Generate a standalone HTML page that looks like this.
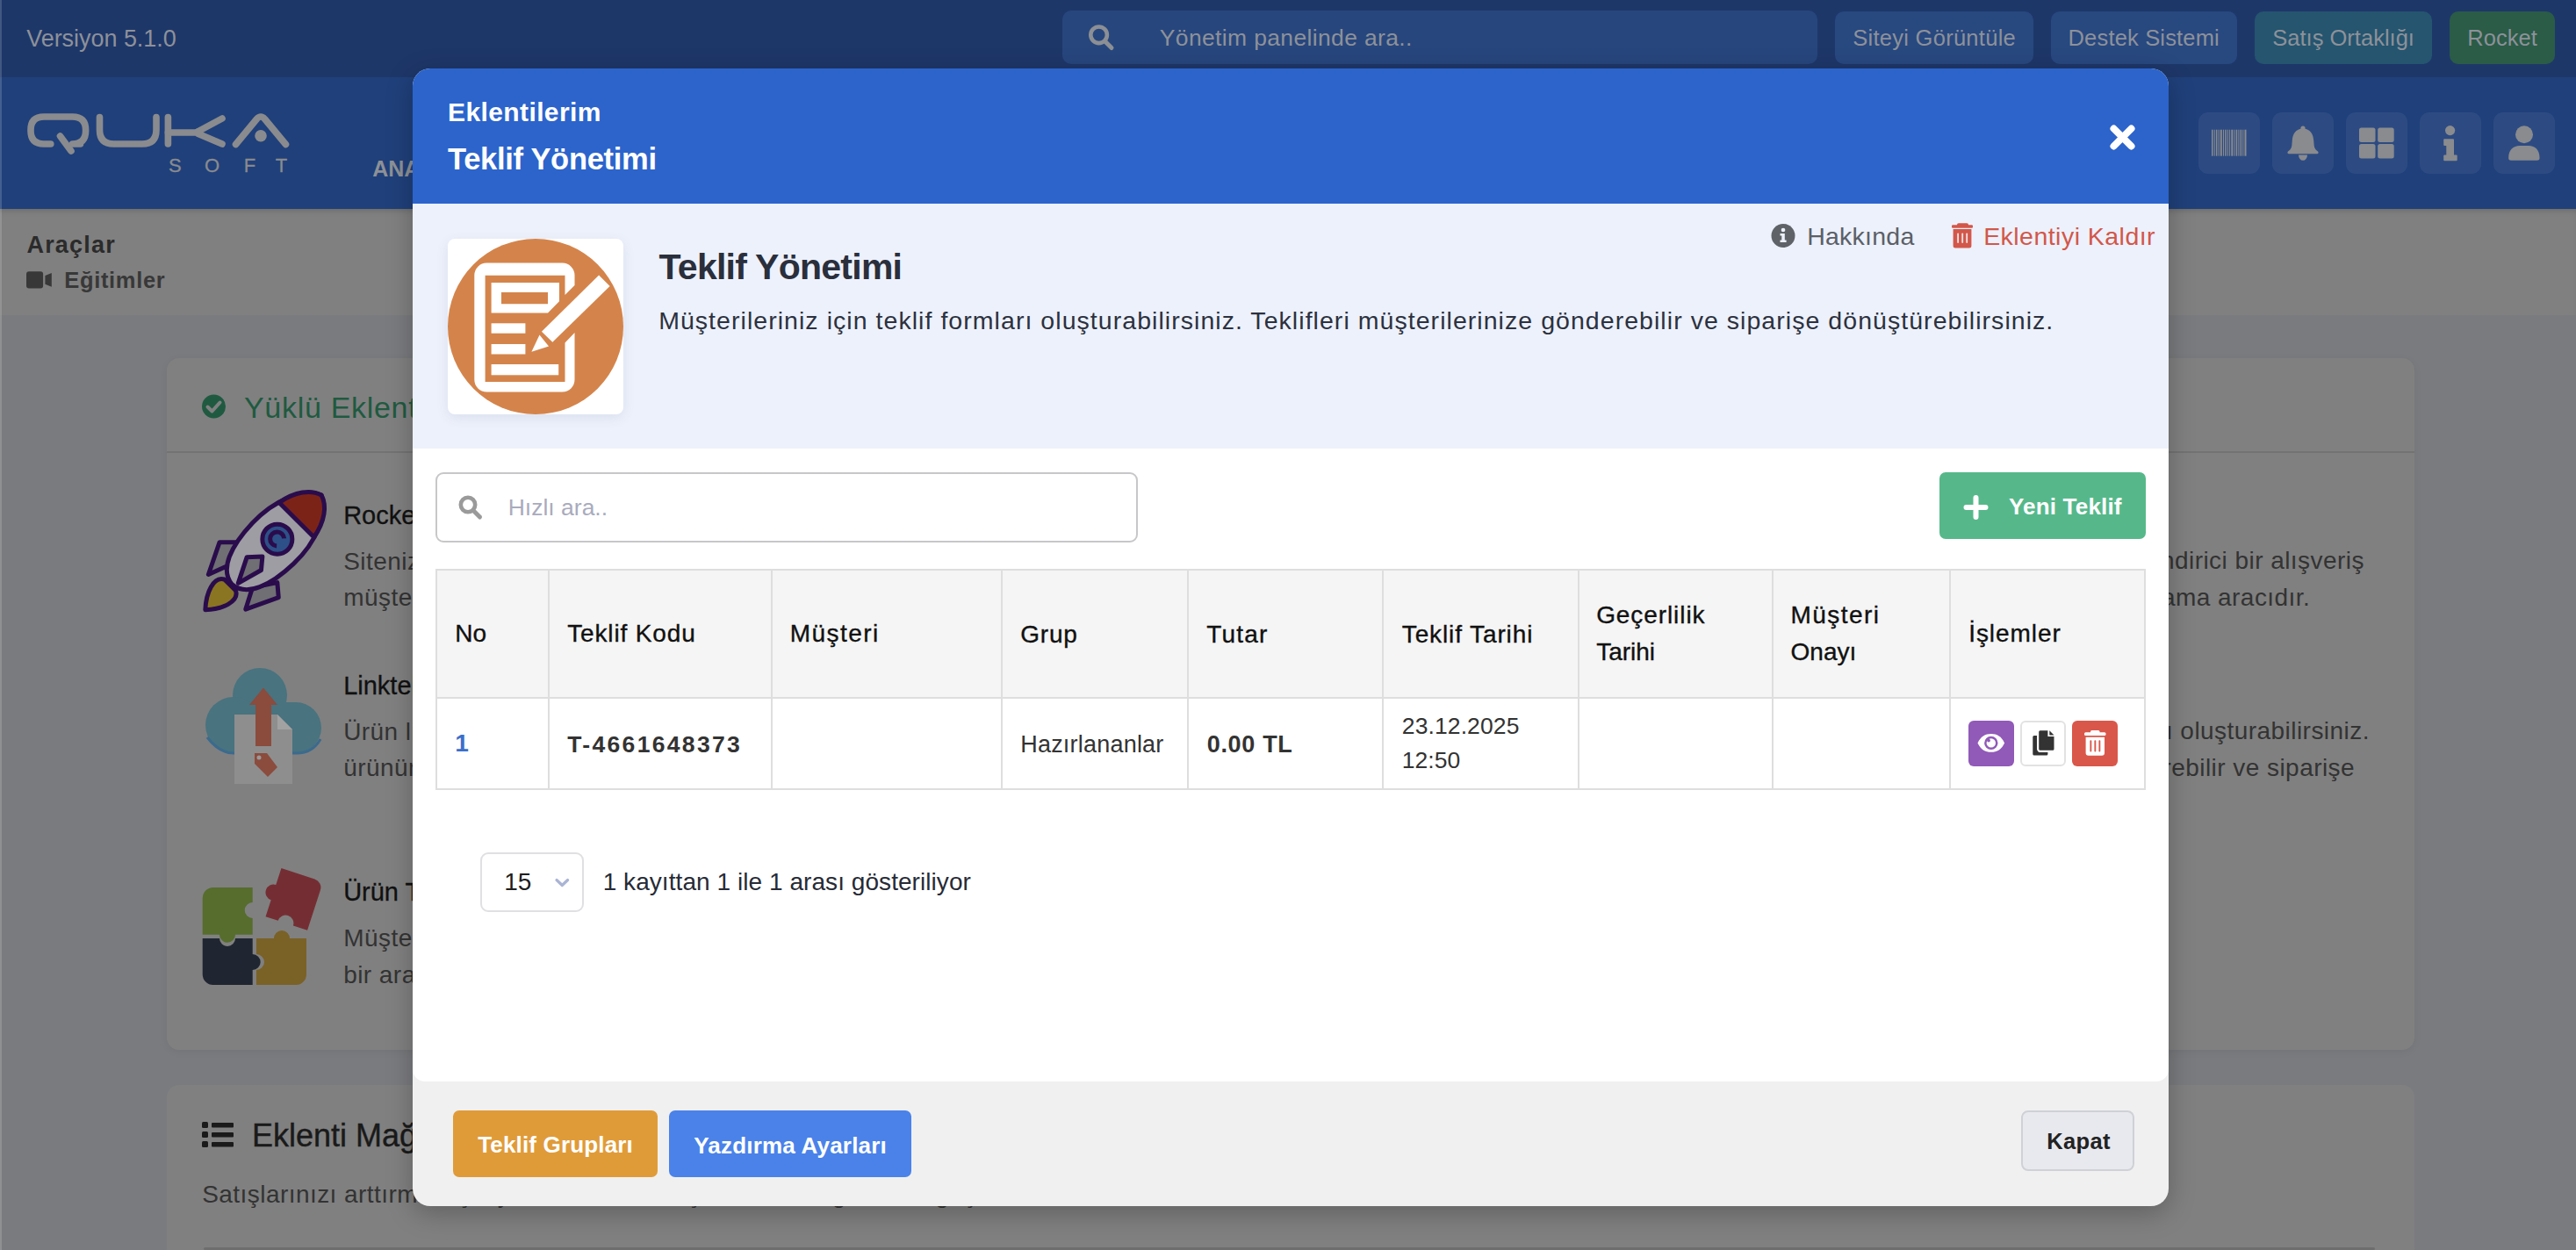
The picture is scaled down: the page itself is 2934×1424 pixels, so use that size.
<!DOCTYPE html>
<html><head><meta charset="utf-8"><style>
html,body{margin:0;padding:0;width:2934px;height:1424px;overflow:hidden;}
body{position:relative;font-family:"Liberation Sans",sans-serif;background:#7a7b7e;}
.t{position:absolute;white-space:nowrap;line-height:1;}
svg{overflow:visible}
</style></head><body>
<div style="position:absolute;left:0px;top:0px;width:2934px;height:88px;background:#1e3769"></div>
<div style="position:absolute;left:0px;top:88px;width:2934px;height:150px;background:#20407b"></div>
<div style="position:absolute;left:0px;top:238px;width:2934px;height:121px;background:#808080;box-shadow:inset 0 6px 8px -6px rgba(0,0,0,0.25)"></div>
<div class="t" style="left:30.19px;top:31.14px;font-size:27px;font-weight:400;color:#8d9199;letter-spacing:-0.039px;">Versiyon 5.1.0</div>
<div style="position:absolute;left:1210px;top:12px;width:860px;height:61px;background:#27467d;border-radius:10px"></div>
<svg style="position:absolute;left:1230px;top:20px;" width="50" height="50" viewBox="1230 20 50 50"><circle cx="1251.6" cy="39.8" r="9.3" fill="none" stroke="#8c8f94" stroke-width="4.6"/><line x1="1258.5" y1="47" x2="1266" y2="54.5" stroke="#8c8f94" stroke-width="5" stroke-linecap="round"/></svg>
<div class="t" style="left:1320.80px;top:30.07px;font-size:26.5px;font-weight:400;color:#8d9199;letter-spacing:0.349px;">Yönetim panelinde ara..</div>
<div style="position:absolute;left:2090px;top:13px;width:226px;height:60px;background:#284880;border-radius:10px"></div>
<div class="t" style="left:2110.24px;top:30.91px;font-size:25.5px;font-weight:400;color:#8d9199;letter-spacing:0.273px;">Siteyi Görüntüle</div>
<div style="position:absolute;left:2336px;top:13px;width:212px;height:60px;background:#284880;border-radius:10px"></div>
<div class="t" style="left:2355.54px;top:30.91px;font-size:25.5px;font-weight:400;color:#8d9199;letter-spacing:0.168px;">Destek Sistemi</div>
<div style="position:absolute;left:2568px;top:13px;width:202px;height:60px;background:#25556f;border-radius:10px"></div>
<div class="t" style="left:2588.24px;top:30.91px;font-size:25.5px;font-weight:400;color:#8d9199;letter-spacing:0.012px;">Satış Ortaklığı</div>
<div style="position:absolute;left:2790px;top:13px;width:120px;height:60px;background:#2a5c47;border-radius:10px"></div>
<div class="t" style="left:2810.24px;top:30.91px;font-size:25.5px;font-weight:400;color:#8d9199;letter-spacing:0.071px;">Rocket</div>
<svg style="position:absolute;left:20px;top:115px;" width="330" height="100" viewBox="20 115 330 100"><g fill="none" stroke="#8a8b8e" stroke-width="7.6" stroke-linecap="round" stroke-linejoin="round">
<path d="M57.8 164 H50 Q35 164 35 149 V148 Q35 133 50 133 H82.5 Q97.6 133 97.6 148 V149 Q97.6 164 82.5 164 H91.5"/>
<path d="M68.5 155 L81 172"/>
<path d="M113.5 133.5 V148 Q113.5 164 129.5 164 H162 Q178 164 178 148 V133.5"/>
<path d="M191.4 133.5 V164"/>
<path d="M191.4 151 H222 M253 135 L226 149.5 Q223 151 226 152.5 L253 164"/>
<path d="M268.5 164.5 L292.5 135.5 Q297 130.5 301.5 135.5 L325.5 164.5"/>
</g><circle cx="297" cy="154.8" r="6.8" fill="#8a8b8e"/></svg>
<div class="t" style="left:192.04px;top:178.38px;font-size:22px;font-weight:400;color:#8a8b8e;letter-spacing:0.000px;-webkit-text-stroke:0.3px #8a8b8e">S</div>
<div class="t" style="left:233.04px;top:178.38px;font-size:22px;font-weight:400;color:#8a8b8e;letter-spacing:0.000px;-webkit-text-stroke:0.3px #8a8b8e">O</div>
<div class="t" style="left:277.74px;top:178.38px;font-size:22px;font-weight:400;color:#8a8b8e;letter-spacing:0.000px;-webkit-text-stroke:0.3px #8a8b8e">F</div>
<div class="t" style="left:313.74px;top:178.38px;font-size:22px;font-weight:400;color:#8a8b8e;letter-spacing:0.000px;-webkit-text-stroke:0.3px #8a8b8e">T</div>
<div class="t" style="left:424.25px;top:179.84px;font-size:25px;font-weight:700;color:#8e9196;letter-spacing:0.000px;">ANA</div>
<div style="position:absolute;left:2504px;top:128px;width:70px;height:70px;background:rgba(255,255,255,0.06);border-radius:11px"></div>
<div style="position:absolute;left:2588px;top:128px;width:70px;height:70px;background:rgba(255,255,255,0.06);border-radius:11px"></div>
<div style="position:absolute;left:2672px;top:128px;width:70px;height:70px;background:rgba(255,255,255,0.06);border-radius:11px"></div>
<div style="position:absolute;left:2756px;top:128px;width:70px;height:70px;background:rgba(255,255,255,0.06);border-radius:11px"></div>
<div style="position:absolute;left:2840px;top:128px;width:70px;height:70px;background:rgba(255,255,255,0.06);border-radius:11px"></div>
<svg style="position:absolute;left:2510px;top:140px;" width="60" height="45" viewBox="2510 140 60 45"><rect x="2519" y="147.7" width="1.5" height="30" fill="#8a8b8e"/><rect x="2521.7" y="147.7" width="1" height="30" fill="#8a8b8e"/><rect x="2523.8999999999996" y="147.7" width="1.5" height="30" fill="#8a8b8e"/><rect x="2526.5999999999995" y="147.7" width="1" height="30" fill="#8a8b8e"/><rect x="2528.7999999999993" y="147.7" width="2" height="30" fill="#8a8b8e"/><rect x="2531.999999999999" y="147.7" width="1" height="30" fill="#8a8b8e"/><rect x="2534.199999999999" y="147.7" width="1.5" height="30" fill="#8a8b8e"/><rect x="2536.8999999999987" y="147.7" width="1" height="30" fill="#8a8b8e"/><rect x="2539.0999999999985" y="147.7" width="1" height="30" fill="#8a8b8e"/><rect x="2541.2999999999984" y="147.7" width="2" height="30" fill="#8a8b8e"/><rect x="2544.499999999998" y="147.7" width="1" height="30" fill="#8a8b8e"/><rect x="2546.699999999998" y="147.7" width="1.5" height="30" fill="#8a8b8e"/><rect x="2549.399999999998" y="147.7" width="1" height="30" fill="#8a8b8e"/><rect x="2551.5999999999976" y="147.7" width="1.5" height="30" fill="#8a8b8e"/><rect x="2554.2999999999975" y="147.7" width="1" height="30" fill="#8a8b8e"/><rect x="2556.4999999999973" y="147.7" width="2" height="30" fill="#8a8b8e"/></svg>
<svg style="position:absolute;left:2600px;top:138px;" width="48" height="50" viewBox="2600 138 48 50"><circle cx="2623" cy="146" r="2.6" fill="#8a8b8e"/><path d="M2623 146.5 C2614.5 146.5 2611.2 153 2610.8 160 L2610.3 166 C2610 169.5 2607.5 171.5 2606 172.5 A1.6 1.6 0 0 0 2606.8 175.3 H2639.2 A1.6 1.6 0 0 0 2640 172.5 C2638.5 171.5 2636 169.5 2635.7 166 L2635.2 160 C2634.8 153 2631.5 146.5 2623 146.5 Z" fill="#8a8b8e"/><path d="M2618 176.5 H2628 A5 6.3 0 0 1 2618 176.5 Z" fill="#8a8b8e"/></svg>
<svg style="position:absolute;left:2680px;top:140px;" width="55" height="50" viewBox="2680 140 55 50"><rect x="2687" y="145.6" width="18.5" height="16.3" rx="2.5" fill="#8a8b8e"/><rect x="2708.2" y="145.6" width="18.5" height="16.3" rx="2.5" fill="#8a8b8e"/><rect x="2687" y="164.1" width="18.5" height="16.3" rx="2.5" fill="#8a8b8e"/><rect x="2708.2" y="164.1" width="18.5" height="16.3" rx="2.5" fill="#8a8b8e"/></svg>
<svg style="position:absolute;left:2775px;top:138px;" width="30" height="50" viewBox="2775 138 30 50"><circle cx="2790.6" cy="148.6" r="5.6" fill="#8a8b8e"/><path d="M2784.2 159.3 H2794 V177.6 H2797.7 V182.2 H2784.2 V177.6 H2787.3 V165 H2784.2 Z" fill="#8a8b8e" stroke="#8a8b8e" stroke-width="2" stroke-linejoin="round"/></svg>
<svg style="position:absolute;left:2850px;top:138px;" width="50" height="50" viewBox="2850 138 50 50"><circle cx="2875" cy="153.2" r="10" fill="#8a8b8e"/><path d="M2857.2 179.5 C2857.2 171 2862.5 166 2870 166 H2880 C2887.5 166 2892.5 171 2892.5 179.5 A3 3 0 0 1 2889.5 182.8 H2860.2 A3 3 0 0 1 2857.2 179.5 Z" fill="#8a8b8e"/></svg>
<div class="t" style="left:30.49px;top:265.94px;font-size:27px;font-weight:700;color:#2b2b2b;letter-spacing:1.190px;">Araçlar</div>
<svg style="position:absolute;left:25px;top:305px;" width="40" height="30" viewBox="25 305 40 30"><rect x="30" y="309.3" width="19.1" height="19.3" rx="3" fill="#383838"/><path d="M51.4 314 L58.8 311 V326.8 L51.4 323.8 Z" fill="#383838"/></svg>
<div class="t" style="left:73.33px;top:307.01px;font-size:25.5px;font-weight:700;color:#383838;letter-spacing:0.651px;">Eğitimler</div>
<div style="position:absolute;left:190px;top:408px;width:2560px;height:788px;background:#808080;border-radius:14px;box-shadow:0 2px 10px rgba(0,0,0,0.06)"></div>
<div style="position:absolute;left:190px;top:514px;width:2560px;height:2px;background:#737373"></div>
<svg style="position:absolute;left:225px;top:445px;" width="40" height="40" viewBox="225 445 40 40"><circle cx="243.5" cy="463" r="13.5" fill="#1f5a40"/><path d="M236.5 463.5 L241.5 468.5 L250.5 458.5" fill="none" stroke="#808080" stroke-width="4" stroke-linecap="round" stroke-linejoin="round"/></svg>
<div class="t" style="left:277.98px;top:447.22px;font-size:34px;font-weight:400;color:#1f5a40;letter-spacing:0.000px;letter-spacing:0.7px">Yüklü Eklentiler</div>
<div class="t" style="left:391.13px;top:573.45px;font-size:29px;font-weight:400;color:#111111;letter-spacing:0.000px;-webkit-text-stroke:0.3px #111">Rocket</div>
<div class="t" style="left:391.16px;top:626.30px;font-size:28px;font-weight:400;color:#333333;letter-spacing:0.000px;letter-spacing:0.45px">Sitenizde müşterilerinize</div>
<div class="t" style="left:391.16px;top:667.30px;font-size:28px;font-weight:400;color:#333333;letter-spacing:0.000px;letter-spacing:0.45px">müşterilerinize</div>
<div class="t" style="left:391.13px;top:767.45px;font-size:29px;font-weight:400;color:#111111;letter-spacing:0.000px;-webkit-text-stroke:0.3px #111">Linktek</div>
<div class="t" style="left:391.16px;top:820.30px;font-size:28px;font-weight:400;color:#333333;letter-spacing:0.000px;letter-spacing:0.45px">Ürün linklerinizi</div>
<div class="t" style="left:391.16px;top:861.30px;font-size:28px;font-weight:400;color:#333333;letter-spacing:0.000px;letter-spacing:0.45px">ürününüzü</div>
<div class="t" style="left:391.13px;top:1002.45px;font-size:29px;font-weight:400;color:#111111;letter-spacing:0.000px;-webkit-text-stroke:0.3px #111">Ürün Tamamlayıcı</div>
<div class="t" style="left:391.16px;top:1055.30px;font-size:28px;font-weight:400;color:#333333;letter-spacing:0.000px;letter-spacing:0.45px">Müşterilerinize</div>
<div class="t" style="left:391.16px;top:1097.30px;font-size:28px;font-weight:400;color:#333333;letter-spacing:0.000px;letter-spacing:0.45px">bir araya</div>
<div class="t" style="right:241.56px;top:625.30px;font-size:28px;font-weight:400;color:#333333;letter-spacing:0.000px;letter-spacing:0.45px;margin-right:-0.45px">Müşterilerinize eğlenceli ve ödüllendirici bir alışveriş</div>
<div class="t" style="right:303.16px;top:667.30px;font-size:28px;font-weight:400;color:#333333;letter-spacing:0.000px;letter-spacing:0.45px;margin-right:-0.45px">deneyimi sunan bir sadakat sağlama aracıdır.</div>
<div class="t" style="right:235.56px;top:818.80px;font-size:28px;font-weight:400;color:#333333;letter-spacing:0.000px;letter-spacing:0.45px;margin-right:-0.45px">Müşterileriniz için teklif formları oluşturabilirsiniz.</div>
<div class="t" style="right:252.36px;top:860.80px;font-size:28px;font-weight:400;color:#333333;letter-spacing:0.000px;letter-spacing:0.45px;margin-right:-0.45px">Teklifleri müşterilerinize gönderebilir ve siparişe</div>
<div style="position:absolute;left:190px;top:1236px;width:2560px;height:400px;background:#808080;border-radius:14px"></div>
<svg style="position:absolute;left:225px;top:1272px;" width="45" height="40" viewBox="225 1272 45 40"><g fill="#1a1a1a"><rect x="230" y="1278" width="7" height="7" rx="1.5"/><rect x="230" y="1289" width="7" height="7" rx="1.5"/><rect x="230" y="1300" width="7" height="7" rx="1.5"/><rect x="241" y="1279" width="25" height="5.5" rx="1"/><rect x="241" y="1290" width="25" height="5.5" rx="1"/><rect x="241" y="1301" width="25" height="5.5" rx="1"/></g></svg>
<div class="t" style="left:286.92px;top:1275.53px;font-size:36px;font-weight:400;color:#1a1a1a;letter-spacing:0.000px;-webkit-text-stroke:0.4px #1a1a1a">Eklenti Mağazası</div>
<div class="t" style="left:230.16px;top:1347.30px;font-size:28px;font-weight:400;color:#333333;letter-spacing:0.000px;letter-spacing:0.45px">Satışlarınızı arttırmak için yeni eklentiler keşfedin ve mağazanızı güçlendirin.</div>
<div style="position:absolute;left:232px;top:1421px;width:2473px;height:3px;background:#6e6e6e;border-radius:3px"></div>
<svg style="position:absolute;left:220px;top:550px;" width="160" height="160" viewBox="220 550 160 160"><g transform="translate(301,629) rotate(45)" stroke="#2a0c4c" stroke-width="5" stroke-linejoin="round">
<path d="M-18 39 L-29 13 L-44 28 L-27 63 Z" fill="#6f6f74"/>
<path d="M19 38 L35 14 L48 25 L31 61 Z" fill="#6f6f74"/>
<path d="M-10 54 C-22 60 -14 80 -1 94 C12 80 20 60 8 54 Z" fill="#8a7522"/>
<path d="M0 -92 C20 -84 34 -50 33 -14 C32 22 22 50 0 52 C-22 50 -32 22 -33 -14 C-34 -50 -20 -84 0 -92 Z" fill="#9d9da3"/>
<path d="M-28 -52 L28 -52 C24 -74 13 -88 0 -92 C-13 -88 -24 -74 -28 -52 Z" fill="#7c2318"/>
<circle cx="0" cy="-21" r="17" fill="#2d5088"/>
<path d="M5 -27 A8 8 0 1 0 5 -15" fill="none" stroke-width="5"/>
<path d="M-10 18 L2 5 L12 17 L4 46 Z" fill="#6f6f74"/>
</g></svg>
<svg style="position:absolute;left:225px;top:750px;" width="150" height="150" viewBox="225 750 150 150"><g fill="#48737f"><circle cx="296" cy="792" r="31"/><circle cx="266" cy="826" r="32"/><circle cx="337" cy="829" r="29"/><rect x="266" y="800" width="72" height="58"/></g>
<path d="M236 840 Q250 858 266 858 H338 Q356 858 365 842" fill="none" stroke="#3b6a8d" stroke-width="3"/>
<path d="M267 814 H316 L333 831 V893 H267 Z" fill="#8e8e8e"/><path d="M316 814 V831 H333 Z" fill="#a2a2a2"/>
<path d="M291 801 H309 V850 H291 Z" fill="#8b4b3d"/><path d="M284 803 L300 783.5 L316 803 Z" fill="#8b4b3d"/>
<path d="M290 858 L304 858 L316 874 L305 885 L290 870 Z" fill="#8b4b3d"/><circle cx="295" cy="863" r="2.5" fill="#9a9a9a"/></svg>
<svg style="position:absolute;left:220px;top:980px;" width="160" height="160" viewBox="220 980 160 160">
<path d="M242.7 1011 H287.7 V1028 A9 9 0 0 0 287.7 1046 V1064.7 H268 A9 9 0 0 1 250 1064.7 H230.7 V1023 A12 12 0 0 1 242.7 1011 Z" fill="#566d2d"/>
<path d="M230.7 1069 H250 A9 9 0 0 0 268 1069 H287.7 V1087 A9 9 0 0 1 287.7 1105 V1122 H242.7 A12 12 0 0 1 230.7 1110 Z" fill="#1f2631"/>
<path d="M292 1069 H312 A9 9 0 0 1 330 1069 H349 V1110 A12 12 0 0 1 337 1122 H292 V1105 A9 9 0 0 0 292 1087 Z" fill="#7a6126"/>
<g transform="rotate(18 334 1025)"><path d="M310 995 H350 A10 10 0 0 1 360 1005 V1053 H343 A9 9 0 0 0 325 1053 H310 V1033 A9 9 0 0 1 310 1015 Z" fill="#742e33"/></g></svg>
<div style="position:absolute;left:470px;top:78px;width:2000px;height:1296px;border-radius:20px;background:#f0f0f0;overflow:hidden;box-shadow:0 8px 30px rgba(0,0,0,0.25)">
<div style="position:absolute;left:0;top:0;width:2000px;height:154px;background:#2c64cc"></div>
<div style="position:absolute;left:0;top:154px;width:2000px;height:279px;background:#edf1fb"></div>
<div style="position:absolute;left:0;top:433px;width:2000px;height:721px;background:#ffffff;border-radius:0 0 14px 14px"></div>
</div>
<div class="t" style="left:510.10px;top:112.60px;font-size:30px;font-weight:700;color:#ffffff;letter-spacing:0.384px;">Eklentilerim</div>
<div class="t" style="left:509.96px;top:163.80px;font-size:34.5px;font-weight:700;color:#ffffff;letter-spacing:-0.295px;">Teklif Yönetimi</div>
<svg style="position:absolute;left:2395px;top:135px;" width="45" height="45" viewBox="2395 135 45 45"><path d="M2407.5 146.5 L2427.5 166.5 M2427.5 146.5 L2407.5 166.5" stroke="#ffffff" stroke-width="8" stroke-linecap="round"/></svg>
<div style="position:absolute;left:510px;top:272px;width:200px;height:200px;background:#ffffff;border-radius:8px;box-shadow:0 4px 14px rgba(60,80,140,0.10)"></div>
<svg style="position:absolute;left:510px;top:272px;" width="200" height="200" viewBox="510 272 200 200"><circle cx="610" cy="372" r="100" fill="#d4844b"/>
<g transform="translate(510,272)" fill="#ffffff">
<path d="M144.5 53 V41.6 A14 14 0 0 0 130.5 27.6 H44.3 A14 14 0 0 0 30.3 41.6 V160.6 A14 14 0 0 0 44.3 174.6 H130.5 A14 14 0 0 0 144.5 160.6 V107 L133.5 118.5 V163 H42.6 V41.7 H133.5 V64 Z"/>
<path fill-rule="evenodd" d="M49.6 50 H127 V71.2 L114 84.5 H49.6 Z M61 61 V74.3 H114 V61 Z"/>
<rect x="49.6" y="96.3" width="38.8" height="11.4"/>
<rect x="49.6" y="120" width="38.8" height="11.5"/>
<rect x="49.6" y="143" width="76.6" height="12.3"/>
<path d="M172.1 41.4 L184.6 53.9 L119.3 117.7 L106.9 105.7 Z"/>
<path d="M104.5 109.6 L115 122.5 L95.4 128.8 Z"/>
</g></svg>
<div class="t" style="left:750.57px;top:284.29px;font-size:41px;font-weight:700;color:#2a2f3c;letter-spacing:-0.741px;">Teklif Yönetimi</div>
<div class="t" style="left:750.14px;top:350.87px;font-size:28.5px;font-weight:400;color:#2c3140;letter-spacing:1.048px;">Müşterileriniz için teklif formları oluşturabilirsiniz. Teklifleri müşterilerinize gönderebilir ve siparişe dönüştürebilirsiniz.</div>
<svg style="position:absolute;left:2015px;top:253px;" width="32" height="32" viewBox="2015 253 32 32"><circle cx="2031" cy="268.5" r="13.5" fill="#5f6368"/><circle cx="2031" cy="262" r="2.3" fill="#edf1fb"/><path d="M2027.5 266 H2032.8 V273.5 H2034.6 V276 H2027.5 V273.5 H2029.3 V268.5 H2027.5 Z" fill="#edf1fb"/></svg>
<div class="t" style="left:2058.14px;top:254.87px;font-size:28.5px;font-weight:400;color:#5b6068;letter-spacing:0.258px;">Hakkında</div>
<svg style="position:absolute;left:2218px;top:250px;" width="34" height="36" viewBox="2218 250 34 36"><g fill="#d2574a"><rect x="2229" y="254.3" width="13" height="4" rx="1.8"/><rect x="2223" y="256.3" width="24" height="3.4" rx="1.2"/><path d="M2224.6 261 H2245.4 V280 A2.5 2.5 0 0 1 2242.9 282.5 H2227.1 A2.5 2.5 0 0 1 2224.6 280 Z"/></g><g fill="#f3e3e6"><rect x="2229.2" y="265.5" width="1.8" height="11.5" rx="0.9"/><rect x="2234.3" y="265.5" width="1.8" height="11.5" rx="0.9"/><rect x="2239.3" y="265.5" width="1.8" height="11.5" rx="0.9"/></g></svg>
<div class="t" style="left:2259.14px;top:254.87px;font-size:28.5px;font-weight:400;color:#d2574a;letter-spacing:0.464px;">Eklentiyi Kaldır</div>
<div style="position:absolute;left:496px;top:538px;width:800px;height:80px;box-sizing:border-box;border:2px solid #c7c7c9;border-radius:9px;background:#fff"></div>
<svg style="position:absolute;left:515px;top:558px;" width="45" height="45" viewBox="515 558 45 45"><circle cx="533" cy="575" r="8.2" fill="none" stroke="#9a9a9a" stroke-width="4.6"/><line x1="539" y1="581.5" x2="546.5" y2="589" stroke="#9a9a9a" stroke-width="5" stroke-linecap="round"/></svg>
<div class="t" style="left:578.71px;top:565.07px;font-size:26.5px;font-weight:400;color:#a9abbd;letter-spacing:0.000px;">Hızlı ara..</div>
<div style="position:absolute;left:2209px;top:538px;width:235px;height:76px;background:#56b88a;border-radius:7px"></div>
<svg style="position:absolute;left:2230px;top:558px;" width="40" height="40" viewBox="2230 558 40 40"><path d="M2250.5 567 V589 M2239.5 578 H2261.5" stroke="#ffffff" stroke-width="6" stroke-linecap="round"/></svg>
<div class="t" style="left:2287.97px;top:563.99px;font-size:26px;font-weight:700;color:#ffffff;letter-spacing:0.187px;">Yeni Teklif</div>
<div style="position:absolute;left:496px;top:648px;width:1948px;height:147px;background:#f5f5f5"></div>
<div style="position:absolute;left:496px;top:648px;width:1948px;height:2px;background:#dedede"></div>
<div style="position:absolute;left:496px;top:794px;width:1948px;height:2px;background:#dedede"></div>
<div style="position:absolute;left:496px;top:898px;width:1948px;height:2px;background:#dedede"></div>
<div style="position:absolute;left:496px;top:648px;width:2px;height:252px;background:#dedede"></div>
<div style="position:absolute;left:2442px;top:648px;width:2px;height:252px;background:#dedede"></div>
<div style="position:absolute;left:624px;top:648px;width:2px;height:252px;background:#dedede"></div>
<div style="position:absolute;left:878px;top:648px;width:2px;height:252px;background:#dedede"></div>
<div style="position:absolute;left:1140px;top:648px;width:2px;height:252px;background:#dedede"></div>
<div style="position:absolute;left:1352px;top:648px;width:2px;height:252px;background:#dedede"></div>
<div style="position:absolute;left:1574px;top:648px;width:2px;height:252px;background:#dedede"></div>
<div style="position:absolute;left:1797px;top:648px;width:2px;height:252px;background:#dedede"></div>
<div style="position:absolute;left:2018px;top:648px;width:2px;height:252px;background:#dedede"></div>
<div style="position:absolute;left:2220px;top:648px;width:2px;height:252px;background:#dedede"></div>
<div class="t" style="left:518.16px;top:708.30px;font-size:28px;font-weight:400;color:#111111;letter-spacing:0.000px;-webkit-text-stroke:0.35px #111">No</div>
<div class="t" style="left:646.16px;top:708.30px;font-size:28px;font-weight:400;color:#111111;letter-spacing:0.871px;-webkit-text-stroke:0.35px #111">Teklif Kodu</div>
<div class="t" style="left:899.66px;top:708.30px;font-size:28px;font-weight:400;color:#111111;letter-spacing:1.481px;-webkit-text-stroke:0.35px #111">Müşteri</div>
<div class="t" style="left:1162.16px;top:708.80px;font-size:28px;font-weight:400;color:#111111;letter-spacing:0.810px;-webkit-text-stroke:0.35px #111">Grup</div>
<div class="t" style="left:1374.16px;top:708.80px;font-size:28px;font-weight:400;color:#111111;letter-spacing:1.217px;-webkit-text-stroke:0.35px #111">Tutar</div>
<div class="t" style="left:1596.76px;top:708.70px;font-size:28px;font-weight:400;color:#111111;letter-spacing:0.891px;-webkit-text-stroke:0.35px #111">Teklif Tarihi</div>
<div class="t" style="left:1818.16px;top:687.30px;font-size:28px;font-weight:400;color:#111111;letter-spacing:0.915px;-webkit-text-stroke:0.35px #111">Geçerlilik</div>
<div class="t" style="left:1818.16px;top:729.30px;font-size:28px;font-weight:400;color:#111111;letter-spacing:0.000px;-webkit-text-stroke:0.35px #111">Tarihi</div>
<div class="t" style="left:2039.56px;top:687.30px;font-size:28px;font-weight:400;color:#111111;letter-spacing:1.431px;-webkit-text-stroke:0.35px #111">Müşteri</div>
<div class="t" style="left:2039.56px;top:729.30px;font-size:28px;font-weight:400;color:#111111;letter-spacing:0.000px;-webkit-text-stroke:0.35px #111">Onayı</div>
<div class="t" style="left:2242.16px;top:708.30px;font-size:28px;font-weight:400;color:#111111;letter-spacing:0.952px;-webkit-text-stroke:0.35px #111">İşlemler</div>
<div class="t" style="left:518.16px;top:833.30px;font-size:28px;font-weight:700;color:#3b6fca;letter-spacing:0.000px;">1</div>
<div class="t" style="left:646.21px;top:834.57px;font-size:26.5px;font-weight:700;color:#333333;letter-spacing:2.332px;">T-4661648373</div>
<div class="t" style="left:1162.19px;top:834.64px;font-size:27px;font-weight:400;color:#333333;letter-spacing:0.212px;">Hazırlananlar</div>
<div class="t" style="left:1374.69px;top:834.64px;font-size:27px;font-weight:700;color:#333333;letter-spacing:0.679px;">0.00 TL</div>
<div class="t" style="left:1596.80px;top:813.97px;font-size:26.5px;font-weight:400;color:#333333;letter-spacing:0.105px;">23.12.2025</div>
<div class="t" style="left:1596.80px;top:853.17px;font-size:26.5px;font-weight:400;color:#333333;letter-spacing:0.015px;">12:50</div>
<div style="position:absolute;left:2242px;top:821px;width:52px;height:51.5px;background:#9159b8;border-radius:6px"></div>
<svg style="position:absolute;left:2245px;top:830px;" width="46" height="34" viewBox="2245 830 46 34"><path d="M2252.5 846.4 C2256 839 2261 836 2267.8 836 C2274.6 836 2279.6 839 2283.1 846.4 C2279.6 853.8 2274.6 856.8 2267.8 856.8 C2261 856.8 2256 853.8 2252.5 846.4 Z" fill="#ffffff"/><circle cx="2267.8" cy="846.4" r="7.7" fill="#9159b8"/><circle cx="2267.8" cy="846.4" r="5.2" fill="#ffffff"/><circle cx="2265" cy="843.6" r="1.9" fill="#9159b8"/></svg>
<div style="position:absolute;left:2301px;top:821px;width:51.5px;height:51.5px;box-sizing:border-box;border:2px solid #e2e2e2;border-radius:6px;background:#fff"></div>
<svg style="position:absolute;left:2308px;top:826px;" width="40" height="40" viewBox="2308 826 40 40"><path d="M2315.3 839.5 A1.5 1.5 0 0 1 2316.8 838 H2320 V853 A4 4 0 0 0 2324 857.1 H2332.4 V858.9 A1.5 1.5 0 0 1 2330.9 860.4 H2316.8 A1.5 1.5 0 0 1 2315.3 858.9 Z" fill="#333"/><path d="M2322.2 833.8 A1.5 1.5 0 0 1 2323.7 832.3 H2332.4 V839 H2339.5 V853.3 A1.5 1.5 0 0 1 2338 854.8 H2323.7 A1.5 1.5 0 0 1 2322.2 853.3 Z" fill="#333" stroke="#fff" stroke-width="2" paint-order="stroke"/><path d="M2334.3 832.3 L2339.5 837.5 H2334.3 Z" fill="#333"/></svg>
<div style="position:absolute;left:2360px;top:821px;width:52px;height:51.5px;background:#d9574a;border-radius:6px"></div>
<svg style="position:absolute;left:2370px;top:828px;" width="34" height="38" viewBox="2370 828 34 38"><g fill="#ffffff"><rect x="2381" y="832" width="10.5" height="4" rx="1.5"/><rect x="2374" y="834.2" width="24.5" height="3.8" rx="1.5"/><path d="M2375.6 839.8 H2397 V857.7 A3 3 0 0 1 2394 860.7 H2378.6 A3 3 0 0 1 2375.6 857.7 Z"/></g><g fill="#d9574a"><rect x="2380.4" y="843.2" width="1.9" height="13.2" rx="0.9"/><rect x="2385.4" y="843.2" width="1.9" height="13.2" rx="0.9"/><rect x="2390.4" y="843.2" width="1.9" height="13.2" rx="0.9"/></g></svg>
<div style="position:absolute;left:547px;top:971px;width:118px;height:68px;box-sizing:border-box;border:2px solid #e0e0e3;border-radius:9px;background:#fff"></div>
<div class="t" style="left:574.16px;top:991.30px;font-size:28px;font-weight:400;color:#1e1e1e;letter-spacing:0.000px;">15</div>
<svg style="position:absolute;left:628px;top:995px;" width="25" height="20" viewBox="628 995 25 20"><path d="M634 1002.5 L640.3 1008.5 L646.6 1002.5" fill="none" stroke="#aab4d4" stroke-width="3.2" stroke-linecap="round" stroke-linejoin="round"/></svg>
<div class="t" style="left:686.66px;top:991.30px;font-size:28px;font-weight:400;color:#272b36;letter-spacing:0.058px;">1 kayıttan 1 ile 1 arası gösteriliyor</div>
<div style="position:absolute;left:516px;top:1265px;width:233px;height:76px;background:#e09b39;border-radius:7px"></div>
<div class="t" style="left:544.22px;top:1290.99px;font-size:26px;font-weight:700;color:#ffffff;letter-spacing:0.158px;">Teklif Grupları</div>
<div style="position:absolute;left:762px;top:1265px;width:276px;height:76px;background:#4a82e9;border-radius:7px"></div>
<div class="t" style="left:790.22px;top:1291.59px;font-size:26px;font-weight:700;color:#ffffff;letter-spacing:0.203px;">Yazdırma Ayarları</div>
<div style="position:absolute;left:2302px;top:1265px;width:128.5px;height:68.5px;box-sizing:border-box;border:2px solid #cfd1d7;border-radius:8px;background:#e8e9ef"></div>
<div class="t" style="left:2331.24px;top:1287.81px;font-size:25.5px;font-weight:700;color:#222222;letter-spacing:0.343px;">Kapat</div>
<div style="position:absolute;left:0px;top:0px;width:2px;height:1424px;background:rgba(255,255,255,0.16)"></div>
</body></html>
